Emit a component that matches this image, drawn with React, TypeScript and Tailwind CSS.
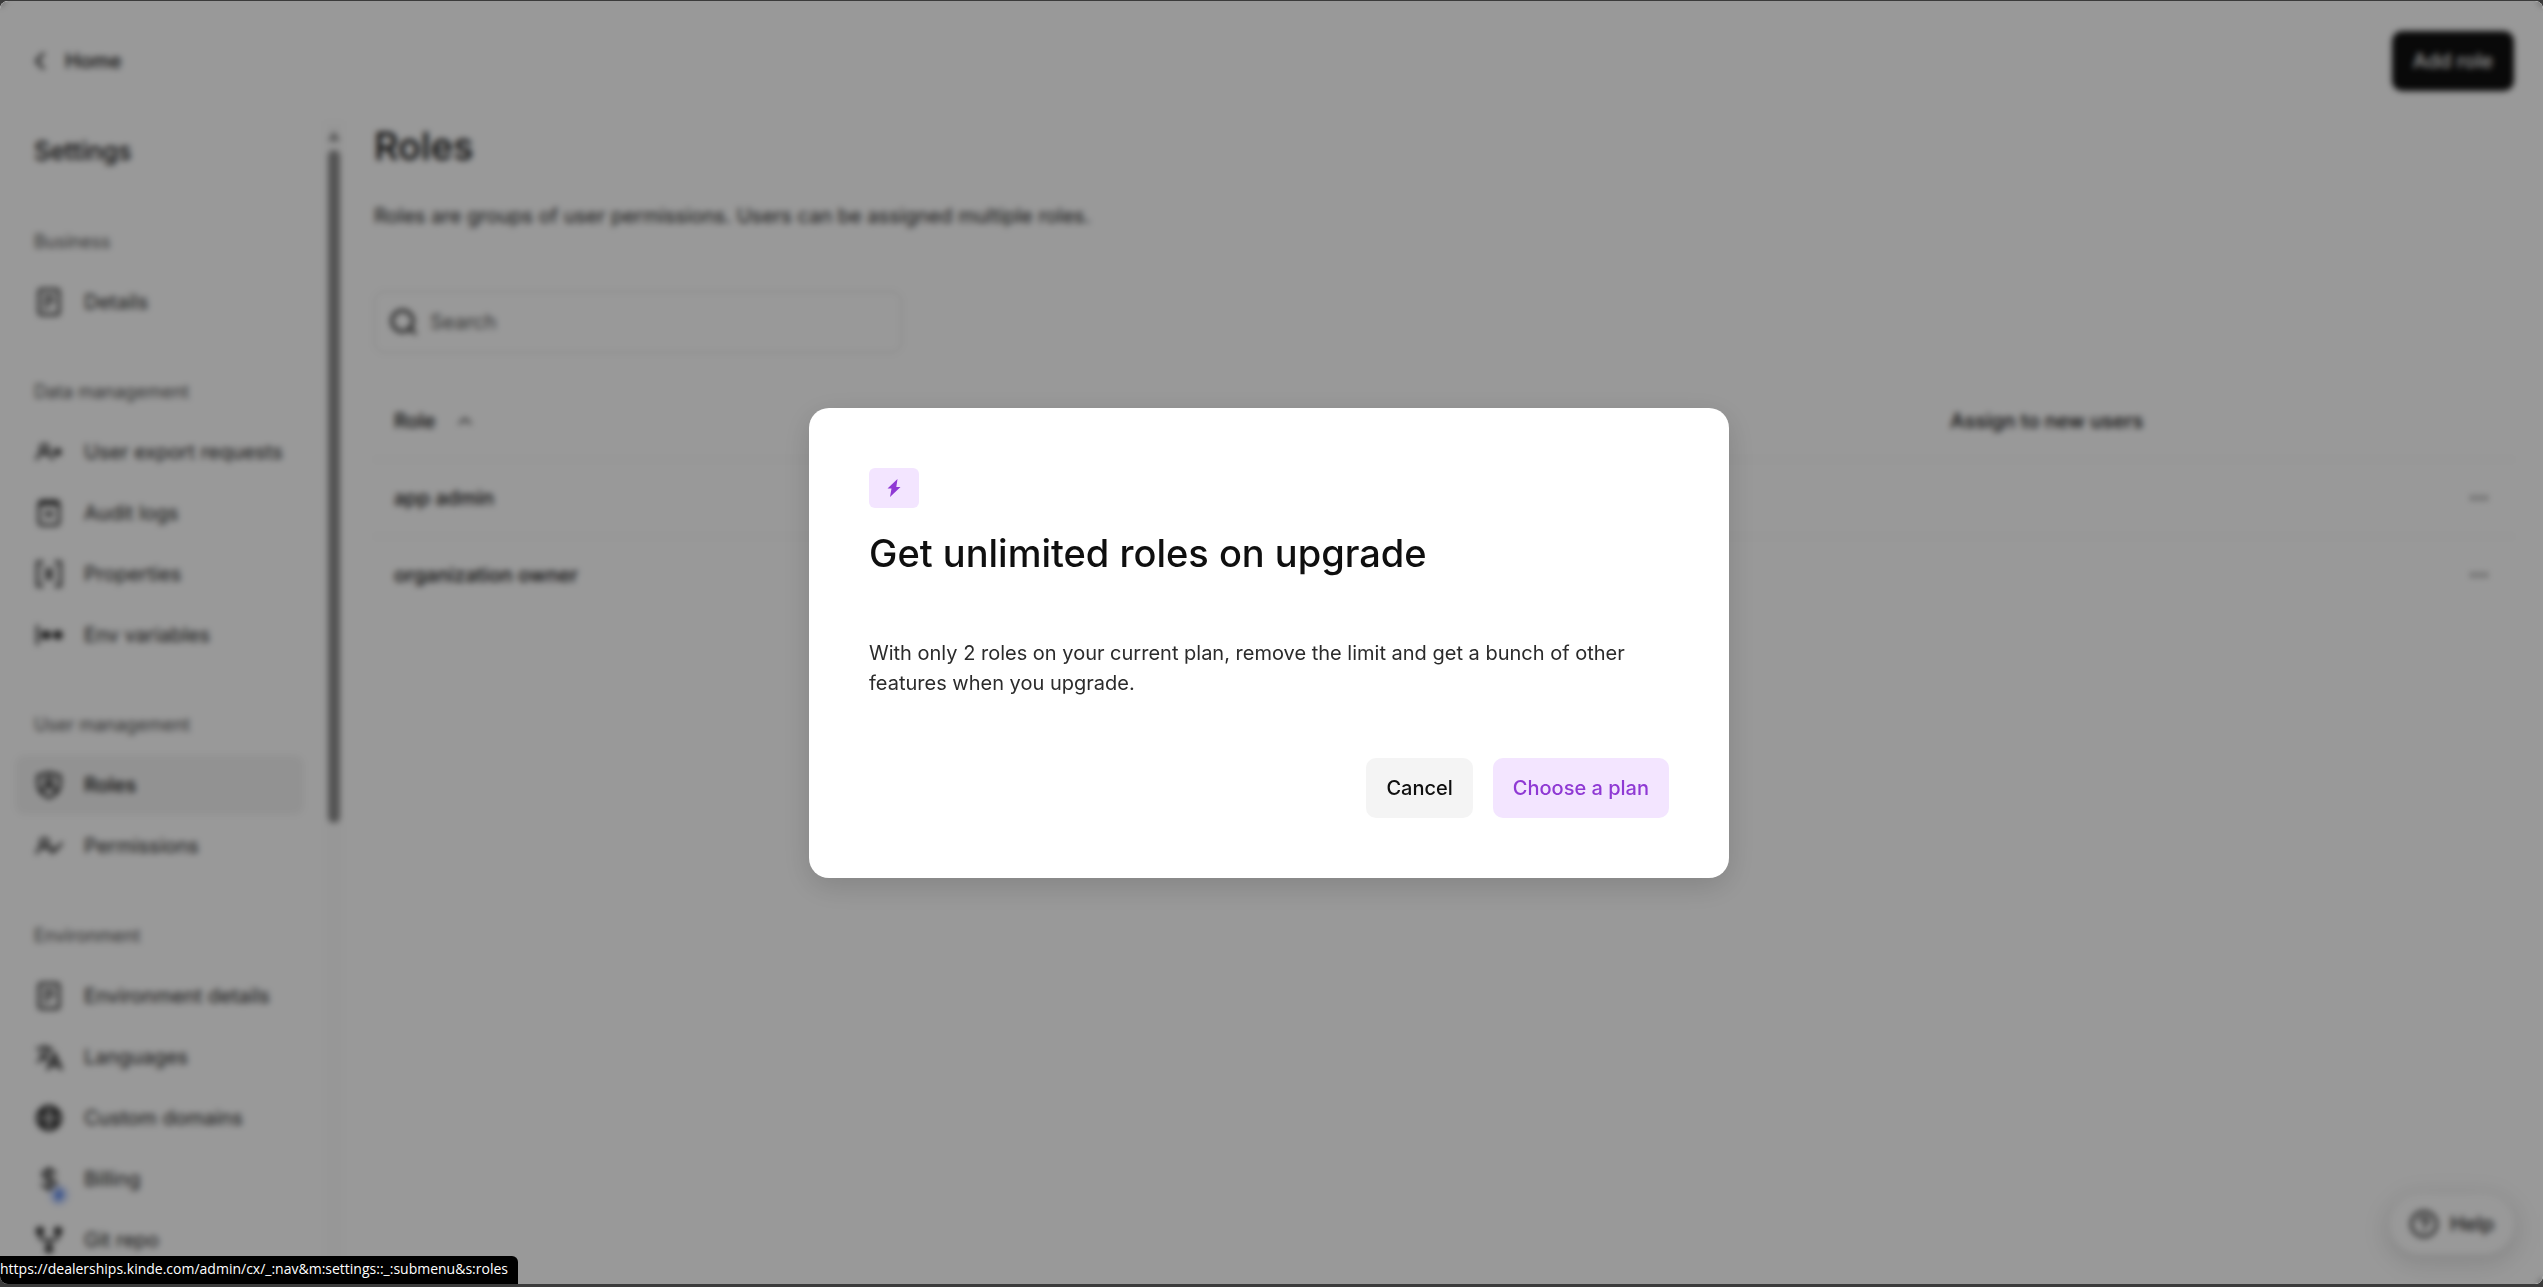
import type { ReactNode } from 'react';

const Icon = ({ children }: { children: ReactNode }) => (
  <svg
    className="h-7 w-7 shrink-0"
    viewBox="0 0 28 28"
    fill="none"
    stroke="currentColor"
    strokeWidth="2.5"
    aria-hidden="true"
  >
    {children}
  </svg>
);

const DocumentIcon = () => (
  <Icon>
    <rect x="4" y="1.5" width="20" height="25" rx="2.5" />
    <path d="M9 8.5h10M9 13.5h10M9 18.5h5" />
  </Icon>
);

const UserExportIcon = () => (
  <Icon>
    <circle cx="9.5" cy="10.5" r="4" />
    <path d="M1.5 22c.8-4.6 3.8-7 8-7s7.2 2.4 8 7" />
    <path d="M22.5 10v8M18.5 14h8" strokeWidth="3.5" />
  </Icon>
);

const AuditIcon = () => (
  <Icon>
    <rect x="4" y="2" width="20" height="24" rx="3" />
    <path d="M4 5h20" strokeWidth="3" />
    <path d="M14 12v6M10 15h8" strokeWidth="3" />
  </Icon>
);

const PropertiesIcon = () => (
  <Icon>
    <path d="M8.5 2h-6v24h6M19.5 2h6v24h-6M10 8l8 12M18 8l-8 12" />
  </Icon>
);

const EnvIcon = () => (
  <Icon>
    <path d="M2.5 4v20" />
    <circle cx="11" cy="14" r="4.5" fill="currentColor" stroke="none" />
    <circle cx="23" cy="14" r="4.5" fill="currentColor" stroke="none" />
    <path d="M5.5 14h22" strokeWidth="1.5" />
  </Icon>
);

const ShieldIcon = () => (
  <Icon>
    <path d="M14 1.8l11 3v8.5c0 6-4.2 10.5-11 13.2C7.2 23.8 3 19.3 3 13.3V4.8z" />
    <circle cx="14" cy="10.5" r="3.5" />
    <path d="M7 21c1-4 3.5-5.5 7-5.5s6 1.5 7 5.5" />
  </Icon>
);

const PermissionsIcon = () => (
  <Icon>
    <circle cx="9.5" cy="10.5" r="4" />
    <path d="M1.5 22c.8-4.6 3.8-7 8-7s7.2 2.4 8 7M17.5 15.5l3 3 6.5-8" />
  </Icon>
);

const LanguagesIcon = () => (
  <Icon>
    <path d="M1.5 5.5h16M9.5 2v3.5M14.500 5.500C13 11 8.500 16 2 19M5 9.500c1.800 3.500 4.500 6 8 7.500" />
    <path d="M12.500 27l7-15.500 7 15.500M15 21.800h9" strokeWidth="3" />
  </Icon>
);

const GlobeIcon = () => (
  <Icon>
    <circle cx="14" cy="14" r="11.5" strokeWidth="3" />
    <ellipse cx="14" cy="14" rx="5.5" ry="11.5" strokeWidth="3" />
    <path d="M2.5 10h23M2.5 18h23" strokeWidth="3" />
  </Icon>
);

const BillingIcon = () => (
  <span className="relative h-7 w-7 shrink-0">
    <Icon>
      <path d="M20.500 9.500c-.6-3-3-4-6.500-4-3.800 0-6.200 1.300-6.200 4.100 0 5.900 13 3 13 9 0 2.700-2.600 4-6.800 4-3.900 0-6.500-1.300-7-4.200M14 2v24" />
    </Icon>
    <svg className="absolute -right-1.5 -bottom-3 h-5 w-5" viewBox="0 0 20 20" aria-hidden="true">
      <circle cx="10" cy="10" r="10" fill="#cfdcff" />
      <path d="M12.500 1.500L5 11.500h4l-2 7 8-10h-4z" fill="#2f66dd" />
    </svg>
  </span>
);

const ForkIcon = () => (
  <Icon>
    <circle cx="5" cy="5" r="3" fill="currentColor" />
    <circle cx="23" cy="5" r="3" fill="currentColor" />
    <circle cx="14" cy="23" r="3" fill="currentColor" />
    <path d="M5 8v2c0 3 2 4 4.500 4h9c2.500 0 4.500-1 4.500-4V8M14 14v7" />
  </Icon>
);

const BoltIcon = ({ className }: { className: string }) => (
  <svg className={className} viewBox="0 0 14 20" fill="currentColor" aria-hidden="true">
    <path d="M10.500 1L.5 10.500h4L3 19l10.500-10h-4.200z" />
  </svg>
);

const NAV = [
  { label: 'Business', items: [{ name: 'Details', icon: DocumentIcon }] },
  {
    label: 'Data management',
    items: [
      { name: 'User export requests', icon: UserExportIcon },
      { name: 'Audit logs', icon: AuditIcon },
      { name: 'Properties', icon: PropertiesIcon },
      { name: 'Env variables', icon: EnvIcon },
    ],
  },
  {
    label: 'User management',
    items: [
      { name: 'Roles', icon: ShieldIcon, active: true },
      { name: 'Permissions', icon: PermissionsIcon },
    ],
  },
  {
    label: 'Environment',
    items: [
      { name: 'Environment details', icon: DocumentIcon },
      { name: 'Languages', icon: LanguagesIcon },
      { name: 'Custom domains', icon: GlobeIcon },
      { name: 'Billing', icon: BillingIcon },
      { name: 'Git repo', icon: ForkIcon },
    ],
  },
];

const ROLES = ['app admin', 'organization owner'];

const Header = () => (
  <header className="flex shrink-0 items-center justify-between py-[30px] pr-[29px] pl-[35px]">
    <a href="#home" className="flex items-center gap-5 font-medium text-[#0f0f0f]">
      <svg className="h-5 w-2.5" viewBox="0 0 10 20" fill="none" stroke="currentColor" strokeWidth="2.5" aria-hidden="true">
        <path d="M9 2L1.5 10 9 18" />
      </svg>
      Home
    </a>
    <button type="button" className="h-[60px] rounded-[10px] bg-[#0f0f0f] px-[21px] font-medium text-white">
      Add role
    </button>
  </header>
);

const Sidebar = () => (
  <aside className="flex w-[344px] shrink-0 overflow-hidden">
    <nav className="min-w-0 flex-1 pt-[15px] pr-5 pl-[15px]" aria-label="Settings">
      <h2 className="mb-[66px] pl-[19px] text-[25px] leading-[30px] font-medium text-[#0f0f0f]">Settings</h2>
      {NAV.map((group) => (
        <section key={group.label} className="mb-[50px]">
          <h3 className="mb-5 pl-[19px] text-lg leading-5 text-[#525252]">{group.label}</h3>
          <ul className="flex flex-col gap-px">
            {group.items.map((item) => (
              <li key={item.name}>
                <a
                  href="#"
                  className={
                    'active' in item
                      ? 'flex h-[60px] items-center gap-[21px] rounded-[10px] bg-[#f4f4f4] pl-5 font-medium whitespace-nowrap text-[#0f0f0f]'
                      : 'flex h-[60px] items-center gap-[21px] rounded-[10px] pl-5 whitespace-nowrap text-[#1f1f1f]'
                  }
                >
                  <item.icon />
                  {item.name}
                </a>
              </li>
            ))}
          </ul>
        </section>
      ))}
    </nav>
    {/* scroll bar */}
    <div className="flex w-5 shrink-0 flex-col items-center bg-[#fcfcfc] pt-2.5">
      <svg className="h-2.5 w-3" viewBox="0 0 12 10" fill="#8b8b8b" aria-hidden="true">
        <path d="M6 0l6 10H0z" />
      </svg>
      <div className="mt-[9px] h-7/12 w-3 rounded-full bg-[#8b8b8b]" />
    </div>
  </aside>
);

const RolesPage = () => (
  <main className="min-w-0 flex-1 pr-[29px] pl-[30px]">
    <h1 className="text-[38px] leading-[50px] font-medium text-[#0f0f0f]">Roles</h1>
    <p className="mt-[30px] text-[#1f1f1f]">
      Roles are groups of user permissions. Users can be assigned multiple roles.
    </p>
    <label className="mt-[60px] flex h-[62px] w-[528px] items-center gap-3 rounded-[10px] border border-[#dedede] px-[15px]">
      <svg className="h-7 w-7 shrink-0" viewBox="0 0 28 28" fill="none" stroke="#2b2b2b" strokeWidth="3" aria-hidden="true">
        <circle cx="12.5" cy="13" r="10.5" />
        <path d="M18.5 19l7.5 7" />
      </svg>
      <input
        type="search"
        aria-label="Search"
        placeholder="Search"
        className="min-w-0 flex-1 outline-none placeholder:text-[#525252]"
      />
    </label>
    <table className="mt-[30px] w-full table-fixed border-separate border-spacing-0 text-left">
      <thead>
        <tr className="text-[#0f0f0f]">
          <th scope="col" className="h-[77px] w-8/11 border-b border-[#ececec] px-5 font-medium">
            <span className="flex items-center gap-[22px]">
              Role
              <svg className="h-2 w-3.5" viewBox="0 0 14 8" fill="none" stroke="#3b3b3b" strokeWidth="2" aria-hidden="true">
                <path d="M1 7l6-5.5L13 7" />
              </svg>
            </span>
          </th>
          <th scope="col" className="border-b border-[#ececec] px-5 font-medium">Assign to new users</th>
          <th scope="col" className="w-[70px] border-b border-[#ececec]" aria-label="Actions" />
        </tr>
      </thead>
      <tbody>
        {ROLES.map((role) => (
          <tr key={role} className="group">
            <td className="h-[77px] border-b border-[#ececec] px-5 font-medium text-[#0f0f0f] group-last:border-transparent">
              {role}
            </td>
            <td className="border-b border-[#ececec] group-last:border-transparent" />
            <td className="border-b border-[#ececec] group-last:border-transparent">
              <button type="button" aria-label={`Actions for ${role}`} className="flex w-full justify-center">
                <svg className="h-1 w-[18px]" viewBox="0 0 18 4" fill="#636363" aria-hidden="true">
                  <circle cx="2.5" cy="2" r="2" />
                  <circle cx="9" cy="2" r="2" />
                  <circle cx="15.5" cy="2" r="2" />
                </svg>
              </button>
            </td>
          </tr>
        ))}
      </tbody>
    </table>
  </main>
);

const HelpButton = () => (
  <button
    type="button"
    className="absolute right-[29px] bottom-[30px] flex h-[60px] items-center gap-3 rounded-full bg-white px-5 font-medium text-[#1f1f1f] shadow-[0_6px_24px_4px_rgba(0,0,0,0.12)]"
  >
    <Icon>
      <circle cx="14" cy="14" r="12.5" />
      <path d="M10 11.5c0-2.3 1.6-3.8 4-3.8s4 1.4 4 3.5c0 2.8-4 2.9-4 5.8" />
      <circle cx="14" cy="20" r="1" fill="currentColor" strokeWidth="1" />
    </Icon>
    Help
  </button>
);

const UpgradeDialog = () => (
  <div
    role="dialog"
    aria-modal="true"
    aria-labelledby="upgrade-title"
    className="w-[920px] max-w-full rounded-[20px] bg-white p-[60px] shadow-[0_8px_30px_rgba(0,0,0,0.15)]"
  >
    <div className="flex h-10 w-[50px] items-center justify-center rounded-md bg-[#f3e5ff] text-[#8f39d4]">
      <BoltIcon className="h-5 w-3.5" />
    </div>
    <h2 id="upgrade-title" className="mt-5 text-[38px] leading-[50px] font-medium text-[#0f0f0f]">
      Get unlimited roles on upgrade
    </h2>
    <p className="mt-[60px] text-[#2b2b2b]">
      With only 2 roles on your current plan, remove the limit and get a bunch of other features when you upgrade.
    </p>
    <div className="mt-[60px] flex justify-end gap-5">
      <button type="button" className="h-[60px] rounded-[10px] bg-[#f4f4f4] px-5 font-medium text-[#0f0f0f]">
        Cancel
      </button>
      <button type="button" className="h-[60px] rounded-[10px] bg-[#f3e5ff] px-5 font-medium text-[#8f39d4]">
        Choose a plan
      </button>
    </div>
  </div>
);

const App = () => {
  return (
    <div className="h-screen bg-[#3b3b3b] pt-px pb-[3px] font-['Inter',sans-serif] text-xl leading-[30px]">
      <div className="relative flex h-full flex-col overflow-hidden rounded-lg bg-white">
        <Header />
        <div className="flex min-h-0 flex-1">
          <Sidebar />
          <RolesPage />
        </div>
        <HelpButton />
        <div className="absolute inset-0 flex items-center justify-center bg-black/40 pr-[5px] backdrop-blur-[3px]">
          <UpgradeDialog />
        </div>
        <div className="absolute bottom-0 left-0 h-7 rounded-tr-md bg-black pr-2.5 font-['Open_Sans','Noto_Sans',sans-serif] text-sm leading-[26px] text-white">
          https://dealerships.kinde.com/admin/cx/_:nav&amp;m:settings::_:submenu&amp;s:roles
        </div>
      </div>
    </div>
  );
};

export default App;
